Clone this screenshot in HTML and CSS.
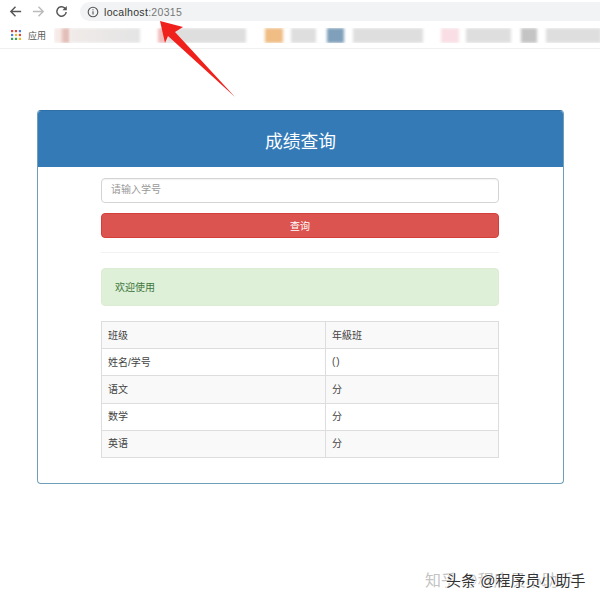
FILE: index.html
```html
<!DOCTYPE html>
<html lang="zh">
<head>
<meta charset="utf-8">
<title>成绩查询</title>
<link rel="stylesheet" href="styles.css">
</head>
<body>
<header class="browser">
  <div class="toolbar">
    <svg class="nav-icon" viewBox="0 0 16 16"><path d="M14 8H3M8 3 3 8l5 5" fill="none" stroke="#555" stroke-width="1.5"/></svg>
    <svg class="nav-icon" viewBox="0 0 16 16"><path d="M2 8h11M8 3l5 5-5 5" fill="none" stroke="#bbb" stroke-width="1.5"/></svg>
    <svg class="nav-icon" viewBox="0 0 16 16"><path d="M13 8.5A5 5 0 1 1 11.5 4.4L13 6" fill="none" stroke="#555" stroke-width="1.6"/><path d="M13.6 2v4.6H9z" fill="#555"/></svg>
    <div class="address">
      <svg class="info" viewBox="0 0 12 12"><circle cx="6" cy="6" r="4.8" fill="none" stroke="#555" stroke-width="1.1"/><path d="M6 5.2v3.4M6 3.2v1.1" stroke="#555" stroke-width="1.1"/></svg>
      <span class="host">localhost</span><span class="port">:20315</span>
    </div>
  </div>
  <div class="bookmarks">
    <svg class="apps" viewBox="0 0 10 10">
      <rect x="0" y="0" width="2.2" height="2.2" fill="#d9483b"/><rect x="3.9" y="0" width="2.2" height="2.2" fill="#d9483b"/><rect x="7.8" y="0" width="2.2" height="2.2" fill="#4a7fe0"/>
      <rect x="0" y="3.9" width="2.2" height="2.2" fill="#4a7fe0"/><rect x="3.9" y="3.9" width="2.2" height="2.2" fill="#e8b92f"/><rect x="7.8" y="3.9" width="2.2" height="2.2" fill="#d9483b"/>
      <rect x="0" y="7.8" width="2.2" height="2.2" fill="#3f9d58"/><rect x="3.9" y="7.8" width="2.2" height="2.2" fill="#3f9d58"/><rect x="7.8" y="7.8" width="2.2" height="2.2" fill="#e8b92f"/>
    </svg>
    <span class="apps-label">应用</span>
    <div class="blurs">
      <i class="blur b-rose"></i><i class="blur b-fade b-w70"></i><i class="blur b-pink"></i><i class="blur b-grey b-w80"></i>
      <i class="blur b-orange"></i><i class="blur b-grey b-w25"></i><i class="blur b-blue"></i><i class="blur b-grey b-w70b"></i>
      <i class="blur b-lpink"></i><i class="blur b-grey b-w45"></i><i class="blur b-dgrey"></i><i class="blur b-grey b-w55"></i>
    </div>
  </div>
</header>

<main class="page">
  <section class="panel">
    <h1 class="panel-title">成绩查询</h1>
    <div class="panel-body">
      <input class="field" type="text" placeholder="请输入学号">
      <button class="btn" type="button">查询</button>
      <hr class="rule">
      <div class="alert">欢迎使用</div>
      <table class="scores">
        <tr><td>班级</td><td>年級班</td></tr>
        <tr><td>姓名/学号</td><td class="paren">()</td></tr>
        <tr><td>语文</td><td>分</td></tr>
        <tr><td>数学</td><td>分</td></tr>
        <tr><td>英语</td><td>分</td></tr>
      </table>
    </div>
  </section>
</main>

<svg class="arrow" viewBox="0 0 100 100"><path d="M1 1 24 7 16 12 76 77 9 16 6 23Z" fill="#f0201c"/></svg>
<div class="mark mark-back">知乎 @程序员小助手</div>
<div class="mark mark-front">头条 @程序员小助手</div>
</body>
</html>
```
FILE: styles.css
```css
* { box-sizing: border-box; }
html, body { margin: 0; }
body {
  position: relative;
  width: 600px;
  height: 604px;
  overflow: hidden;
  background: #fff;
  font-family: "Liberation Sans", "Noto Sans CJK SC", sans-serif;
  color: #444;
}

/* browser chrome */
.browser { height: 49px; border-bottom: 1px solid #efefef; }
.toolbar { display: flex; align-items: center; height: 22px; padding: 1px 0 0 8px; }
.nav-icon { width: 15px; height: 15px; margin-right: 8px; flex: none; }
.address {
  display: flex;
  align-items: center;
  flex: 1;
  height: 19px;
  margin-left: 3px;
  padding-left: 7px;
  background: #f1f3f4;
  border-radius: 10px 0 0 10px;
  font-size: 10.5px;
  letter-spacing: 0.3px;
}
.info { width: 12px; height: 12px; margin-right: 5px; }
.host { color: #333; }
.port { color: #777; }
.bookmarks { display: flex; align-items: center; height: 26px; padding-left: 11px; }
.apps { width: 10px; height: 10px; flex: none; }
.apps-label { margin-left: 7px; font-size: 9px; color: #555; flex: none; }
.blurs { display: flex; align-items: center; margin-left: 8px; flex: 1; overflow: hidden; }
.blur { display: block; height: 15px; filter: blur(1.5px); flex: none; }
.b-grey { background: #dedede; }
.b-fade { background: linear-gradient(90deg, #f0ebe9, #e4e4e4); }
.b-rose { width: 16px; background: linear-gradient(90deg, #f6ebe8 40%, #e3bdb6 60%); }
.b-w70 { width: 70px; margin-right: 18px; }
.b-pink { width: 8px; background: #f2bcbc; }
.b-w80 { width: 80px; margin-right: 19px; }
.b-orange { width: 18px; background: #f0bd85; margin-right: 8px; }
.b-w25 { width: 25px; margin-right: 11px; }
.b-blue { width: 17px; background: #7f9fba; margin-right: 9px; }
.b-w70b { width: 70px; margin-right: 18px; }
.b-lpink { width: 18px; background: #f9dfe5; margin-right: 7px; }
.b-w45 { width: 45px; margin-right: 10px; }
.b-dgrey { width: 16px; background: #c4c4c4; margin-right: 9px; }
.b-w55 { width: 55px; }

/* page */
.page { padding: 61px 36px 0 37px; }
.panel {
  height: 374px;
  border: 1px solid #6f9fb8;
  border-top-color: #2f6fa6;
  border-radius: 4px;
  overflow: hidden;
}
.panel-title {
  margin: 0;
  height: 56px;
  background: #337ab7;
  color: #fff;
  font-size: 17.75px;
  font-weight: 400;
  line-height: 63px;
  text-align: center;
}
.panel-body { padding: 11px 64px 0 63px; }
.field {
  display: block;
  width: 100%;
  height: 25px;
  padding: 0 9px 2px;
  border: 1px solid #d4d4d4;
  border-radius: 4px;
  background: #fff;
  font: 10px "Liberation Sans", "Noto Sans CJK SC", sans-serif;
  box-shadow: inset 0 1px 1px rgba(0, 0, 0, .05);
}
.field::placeholder { color: #999; opacity: 1; }
.btn {
  display: block;
  width: 100%;
  height: 25px;
  margin-top: 10px;
  padding: 0;
  border: 1px solid #d43f3a;
  border-radius: 4px;
  background: #dc5450;
  color: #fff;
  font: 10px "Liberation Sans", "Noto Sans CJK SC", sans-serif;
}
.rule { height: 1px; margin: 14px 0 15px; border: 0; background: #f2f2f2; }
.alert {
  height: 38px;
  padding: 0 13px;
  border: 1px solid #dcebd3;
  border-radius: 4px;
  background: #dff0d8;
  color: #3c763d;
  font-size: 10px;
  line-height: 38px;
}
.scores {
  width: 100%;
  height: 137px;
  margin-top: 15px;
  border-collapse: collapse;
  table-layout: fixed;
  font-size: 10px;
}
.scores td { padding: 0 6px 2px; border: 1px solid #ddd; }
.scores td:first-child { width: 224px; }
.scores .paren { letter-spacing: 1px; }
.scores tr:nth-child(odd) { background: #f9f9f9; }

/* overlays */
.arrow { position: absolute; left: 159px; top: 20px; width: 100px; height: 100px; }
.mark { position: absolute; top: 573px; line-height: 16px; white-space: nowrap; }
.mark-back { left: 425px; font-size: 16px; color: #c4c4c4; }
.mark-front { left: 446px; font-size: 15px; color: #333; text-shadow: 1px 1px 0 #fff, -1px 0 0 #fff; }
```
